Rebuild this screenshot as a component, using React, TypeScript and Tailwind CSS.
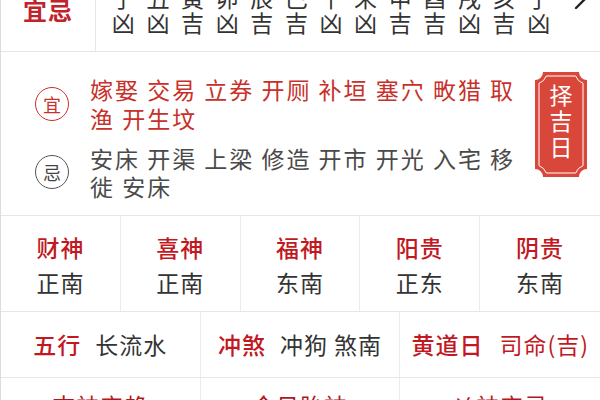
import React from "react";

const topHours = ["子", "丑", "寅", "卯", "辰", "巳", "午", "未", "申", "酉", "戌", "亥", "子"];
const luck = ["凶", "凶", "吉", "凶", "吉", "吉", "凶", "凶", "吉", "吉", "凶", "吉", "凶"];

const gods = [
  ["财神", "正南"],
  ["喜神", "正南"],
  ["福神", "东南"],
  ["阳贵", "正东"],
  ["阴贵", "东南"],
];

function Badge() {
  return (
    <div className="relative w-[52px] h-[105px] shrink-0">
      <svg className="absolute inset-0" width="52" height="105" viewBox="0 0 52 105">
        <path
          d="M8 0 H44 A8 8 0 0 0 52 8 V97 A8 8 0 0 0 44 105 H8 A8 8 0 0 0 0 97 V8 A8 8 0 0 0 8 0 Z"
          fill="#d9473b"
        />
        <path
          d="M11.3 4 H40.7 A12 12 0 0 0 48 11.3 V93.7 A12 12 0 0 0 40.7 101 H11.3 A12 12 0 0 0 4 93.7 V11.3 A12 12 0 0 0 11.3 4 Z"
          fill="none"
          stroke="#ffffff"
          strokeWidth="1"
        />
      </svg>
      <div className="relative flex flex-col items-center pt-[9px] text-white text-[23px] leading-[26px]">
        <span>择</span>
        <span>吉</span>
        <span>日</span>
      </div>
    </div>
  );
}

export default function App() {
  return (
    <div className="w-[600px] h-[400px] overflow-hidden bg-white border-l border-[#dcdcdc] font-['Noto_Sans_CJK_SC','Noto_Sans',sans-serif]">
      {/* Row 1: hours */}
      <div className="flex h-[84px] -mt-[32px] border-b border-[#e6e6e6]">
        <div className="w-[95px] shrink-0 border-r border-[#e6e6e6] flex items-center justify-center text-[24px] font-bold text-[#c0232b] tracking-[1px]">
          宜忌
        </div>
        <div className="pl-[10px] flex items-center">
          <div className="grid grid-cols-[repeat(13,minmax(0,1fr))] w-[450px] text-[23px] leading-[25px] text-[#333]">
            {topHours.map((h, i) => (
              <div key={i} className="flex flex-col items-center">
                <span>{h}</span>
                <span>{luck[i]}</span>
              </div>
            ))}
          </div>
        </div>
        <div className="self-start mt-[18px] ml-[17px]">
          <svg width="16" height="24" viewBox="0 0 16 24">
            <polyline points="3,2 13,12 3,22" fill="none" stroke="#222" strokeWidth="2.4" strokeLinecap="round" strokeLinejoin="round" />
          </svg>
        </div>
      </div>

      {/* Row 2: 宜 / 忌 */}
      <div className="flex h-[164px] border-b border-[#e6e6e6]">
        <div className="flex flex-col gap-[11px] pt-[23px]">
          <div className="flex items-center">
            <div className="ml-[34px] w-[34px] h-[34px] shrink-0 rounded-full border border-[#c9302c] flex items-center justify-center text-[18px] text-[#c9302c]">
              宜
            </div>
            <div className="ml-[21px] w-[432px] text-[23px] leading-[29px] tracking-[2px] text-[#c8302a]">
              嫁娶 交易 立券 开厕 补垣 塞穴 畋猎 取渔 开生坟
            </div>
          </div>
          <div className="flex items-center">
            <div className="ml-[34px] w-[34px] h-[34px] shrink-0 rounded-full border border-[#555] flex items-center justify-center text-[18px] text-[#444]">
              忌
            </div>
            <div className="ml-[21px] w-[432px] text-[23px] leading-[28px] tracking-[2px] text-[#4a4a4a]">
              安床 开渠 上梁 修造 开市 开光 入宅 移徙 安床
            </div>
          </div>
        </div>
        <div className="ml-auto mr-[13px] mt-[20px]">
          <Badge />
        </div>
      </div>

      {/* Row 3: gods */}
      <div className="grid grid-cols-5 h-[96px] border-b border-[#e6e6e6]">
        {gods.map(([k, v], i) => (
          <div
            key={k}
            className={`flex flex-col items-center justify-center pt-[2px] text-[23px] leading-[35px] tracking-[1px] ${i < 4 ? "border-r border-[#ececec]" : ""}`}
          >
            <span className="text-[#c1191f] font-medium">{k}</span>
            <span className="text-[#333]">{v}</span>
          </div>
        ))}
      </div>

      {/* Row 4 */}
      <div className="grid grid-cols-3 h-[66px] border-b border-[#e6e6e6] text-[23px] tracking-[1px]">
        <div className="flex items-center justify-center gap-[14px] border-r border-[#ececec]">
          <span className="text-[#c1191f] font-medium">五行</span>
          <span className="text-[#333]">长流水</span>
        </div>
        <div className="flex items-center justify-center gap-[14px] border-r border-[#ececec]">
          <span className="text-[#c1191f] font-medium">冲煞</span>
          <span className="text-[#333]">冲狗 煞南</span>
        </div>
        <div className="flex items-center justify-center gap-[16px]">
          <span className="text-[#c1191f] font-medium">黄道日</span>
          <span className="text-[#c1191f]">司命(吉)</span>
        </div>
      </div>

      {/* Row 5 */}
      <div className="grid grid-cols-3 h-[60px] text-[23px] leading-[30px] tracking-[1px] text-[#b3161c]">
        <div className="flex justify-center pt-[12px] border-r border-[#ececec]">吉神宜趋</div>
        <div className="flex justify-center pt-[12px] border-r border-[#ececec]">今日胎神</div>
        <div className="flex justify-center pt-[12px]">凶神宜忌</div>
      </div>
    </div>
  );
}
